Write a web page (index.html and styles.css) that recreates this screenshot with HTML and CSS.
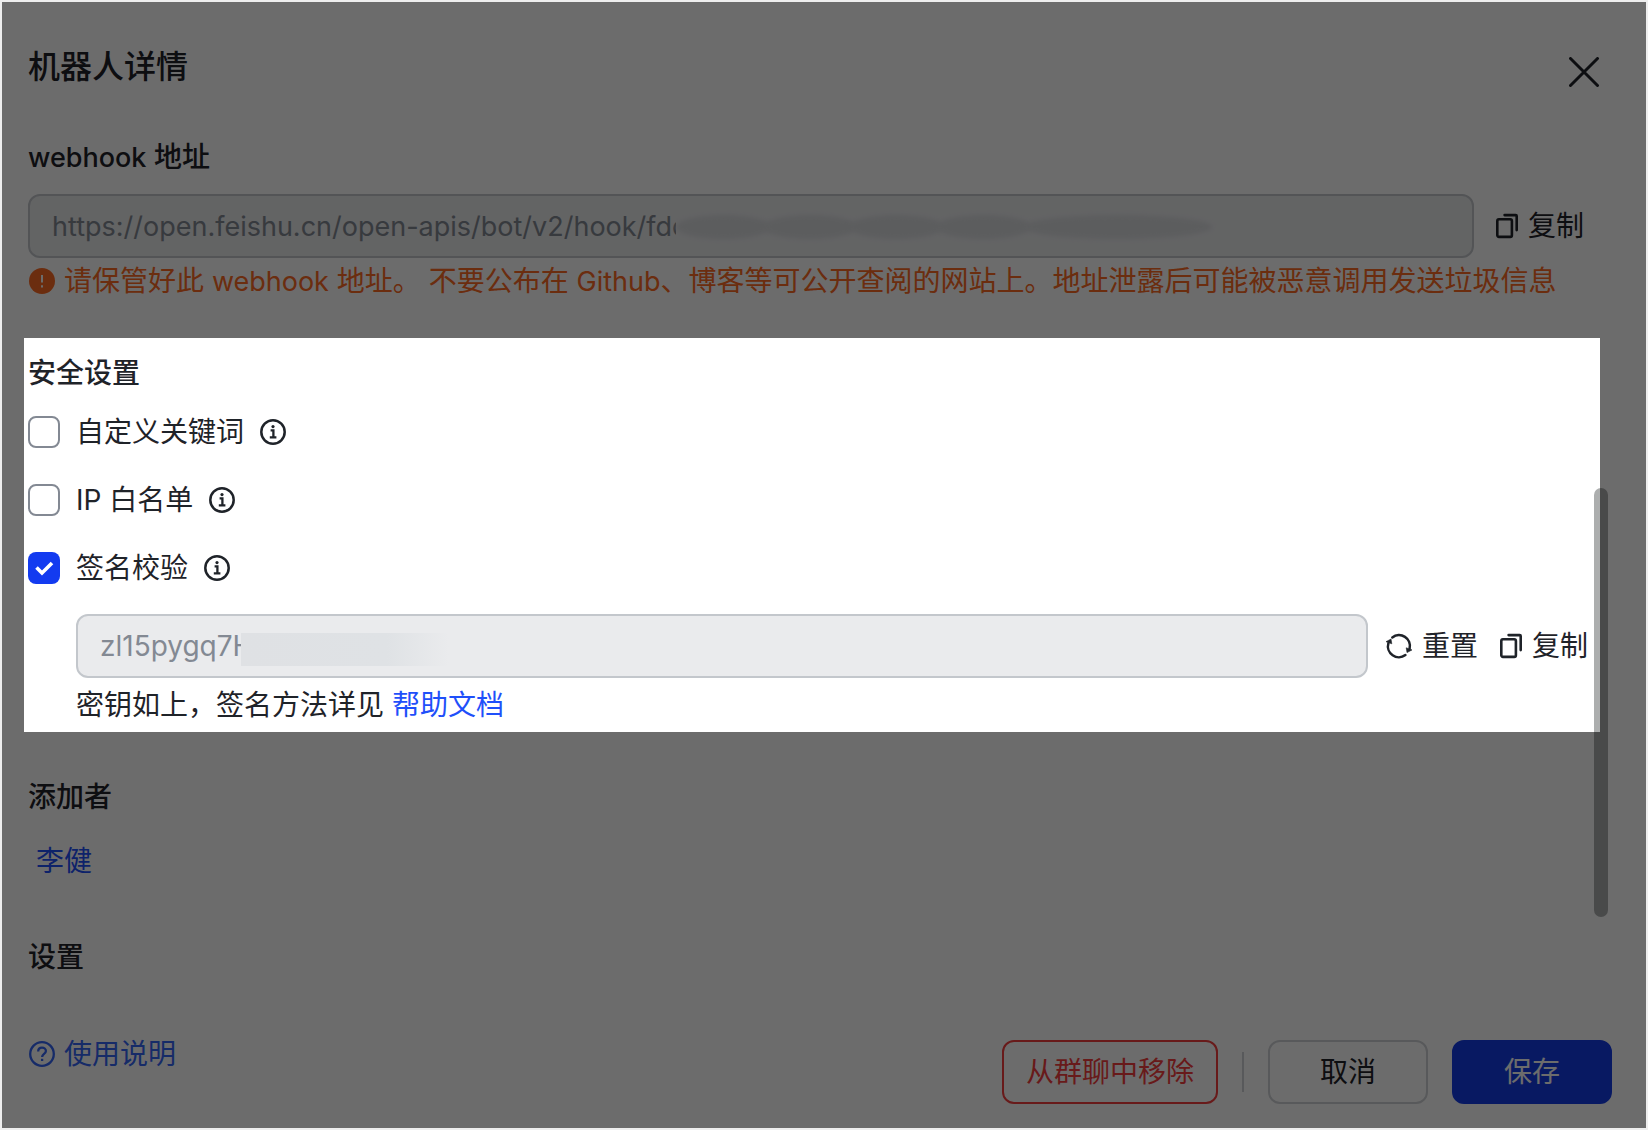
FILE: index.html
```html
<!DOCTYPE html>
<html lang="zh-CN">
<head>
<meta charset="utf-8">
<meta name="viewport" content="width=device-width, initial-scale=1">
<title>机器人详情</title>
<link rel="stylesheet" href="styles.css">
</head>
<body>
<svg class="sprite" aria-hidden="true">
  <symbol id="icon-info" viewBox="0 0 26 26">
    <circle cx="13" cy="13" r="11.7" fill="none" stroke="currentColor" stroke-width="2.5"/>
    <circle cx="13" cy="7.6" r="1.6" fill="currentColor"/>
    <path d="M10.6 11.3h2.8v6.9M9.8 18.3h6.6" fill="none" stroke="currentColor" stroke-width="2.3"/>
  </symbol>
  <symbol id="icon-copy" viewBox="0 0 22 26">
    <rect x="1.3" y="6.3" width="14.6" height="17.6" rx="1.6" fill="none" stroke="currentColor" stroke-width="2.6"/>
    <path d="M8.6 2.1h11.1a1 1 0 0 1 1 1v14" fill="none" stroke="currentColor" stroke-width="2.6" stroke-linecap="round"/>
  </symbol>
  <symbol id="icon-reset" viewBox="0 0 26 26">
    <path d="M6.3 4.4A10.9 10.9 0 0 1 23.6 15.6M19.4 22A10.9 10.9 0 0 1 2.4 10.2" fill="none" stroke="currentColor" stroke-width="2.5" stroke-linecap="round"/>
    <path d="M20.2 14.8l5.8 2.1-5 2.7zM5.8 10.8L0 8.7l5-2.7z" fill="currentColor" stroke="currentColor" stroke-width=".6"/>
  </symbol>
</svg>

<main class="dialog">
  <header class="header">
    <h1 class="title">机器人详情</h1>
    <button class="close" type="button" aria-label="关闭">
      <svg width="31" height="30" viewBox="0 0 31 30"><path d="M1.5 1.5l27 27M28.5 1.5l-27 27" stroke="currentColor" stroke-width="3" stroke-linecap="round"/></svg>
    </button>
  </header>

  <section class="webhook">
    <label class="heading" for="webhook-url"><span class="latin">webhook</span> 地址</label>
    <div class="row">
      <div class="field">
        <input class="input latin" id="webhook-url" type="text" readonly value="https://open.feishu.cn/open-apis/bot/v2/hook/fdc">
        <span class="mask mask-url"><i></i><i></i><i></i><i></i><i></i></span>
      </div>
      <button class="action" type="button"><svg class="icon-copy"><use href="#icon-copy"/></svg>复制</button>
    </div>
    <p class="warning">
      <svg class="icon" viewBox="0 0 26 26"><circle cx="13" cy="13" r="13" fill="currentColor"/><path class="warning-mark" d="M13 7v7.6M13 17.2v2.2"/></svg>
      <span>请保管好此 <span class="latin">webhook</span> 地址。 不要公布在 <span class="latin">Github</span>、博客等可公开查阅的网站上。地址泄露后可能被恶意调用发送垃圾信息</span>
    </p>
  </section>

  <section class="security">
    <h2 class="heading">安全设置</h2>
    <div class="options">
      <div class="option">
        <label class="option-label"><input class="checkbox" type="checkbox">自定义关键词</label>
        <svg class="icon"><use href="#icon-info"/></svg>
      </div>
      <div class="option">
        <label class="option-label"><input class="checkbox" type="checkbox">IP 白名单</label>
        <svg class="icon"><use href="#icon-info"/></svg>
      </div>
      <div class="option">
        <label class="option-label"><input class="checkbox" type="checkbox" checked>签名校验</label>
        <svg class="icon"><use href="#icon-info"/></svg>
      </div>
    </div>
    <div class="secret">
      <div class="row">
        <div class="field">
          <input class="input" type="text" readonly aria-label="签名密钥" value="zl15pygq7H">
          <span class="mask mask-secret"></span>
        </div>
        <button class="action reset" type="button"><svg class="icon"><use href="#icon-reset"/></svg>重置</button>
        <button class="action" type="button"><svg class="icon-copy"><use href="#icon-copy"/></svg>复制</button>
      </div>
      <p class="hint">密钥如上，签名方法详见 <a class="link" href="#">帮助文档</a></p>
    </div>
  </section>

  <section class="owner">
    <h2 class="heading">添加者</h2>
    <a class="link owner-name" href="#">李健</a>
  </section>

  <section class="settings">
    <h2 class="heading">设置</h2>
  </section>

  <footer class="footer">
    <a class="help" href="#">
      <svg class="icon" viewBox="0 0 26 26" fill="none" stroke="currentColor"><circle cx="13" cy="13" r="11.8" stroke-width="2.3"/><path d="M9.2 10.4c0-2.2 1.6-3.7 3.8-3.7s3.9 1.4 3.9 3.4c0 2.8-3.8 2.9-3.8 5.9" stroke-width="2.3"/><path d="M13.1 17.8v2.2" stroke-width="2.3"/></svg>
      使用说明
    </a>
    <div class="buttons">
      <button class="button danger" type="button">从群聊中移除</button>
      <span class="divider"></span>
      <button class="button" type="button">取消</button>
      <button class="button primary" type="button">保存</button>
    </div>
  </footer>
  <div class="scrollbar"></div>
</main>
</body>
</html>
```
FILE: styles.css
```css
* {
  box-sizing: border-box;
}

body {
  margin: 0;
  color: #1f2329;
  background: #fff;
  font: 400 28px/42px Inter, "Noto Sans CJK SC", sans-serif;
}

h1, h2, p {
  margin: 0;
}

a {
  text-decoration: none;
}

button, input {
  font: inherit;
  color: inherit;
}

button {
  padding: 0;
  border: 0;
  background: none;
  cursor: pointer;
}

svg {
  display: block;
  flex: none;
}

.sprite {
  position: absolute;
  width: 0;
  height: 0;
}

.dialog {
  position: relative;
  display: flex;
  flex-direction: column;
  min-height: 100vh;
  padding: 44px 46px 24px 26px;
  border: 2px solid #eee;
  overflow: hidden;
}

.header {
  display: flex;
  justify-content: space-between;
  align-items: flex-start;
  margin-bottom: 38px;
}

.title {
  font-size: 32px;
  line-height: 42px;
  font-weight: 500;
}

.close {
  display: flex;
  align-items: center;
  height: 52px;
}

.heading {
  display: block;
  font-size: 28px;
  line-height: 42px;
  font-weight: 500;
}

.latin {
  font-size: 27px;
  line-height: 1;
}

.row {
  display: flex;
  align-items: center;
  padding-right: 12px;
}

.field {
  position: relative;
  flex: 1;
}

.input {
  display: block;
  width: 100%;
  height: 64px;
  padding: 0 22px;
  border: 2px solid #c3c7cc;
  border-radius: 12px;
  outline: 0;
  color: #838993;
  background: #eaebed;
}

.mask {
  position: absolute;
  background: #eaebed;
}

.mask-url {
  top: 16px;
  left: 648px;
  display: flex;
  align-items: center;
  width: 532px;
  height: 34px;
}

.mask-url i {
  flex: 1;
  height: 24px;
  margin: 0 -4px;
  border-radius: 50%;
  background: #dadcdf;
  filter: blur(2px);
}

.mask-url i:first-child {
  margin-left: 0;
}

.mask-url i:last-child {
  flex: 2;
}

.mask-secret {
  top: 19px;
  left: 165px;
  width: 208px;
  height: 33px;
  background: linear-gradient(90deg, #dfe1e4, #dfe2e5 70%, #eaebed);
}

.action {
  display: flex;
  align-items: center;
  gap: 10px;
  margin-left: 22px;
}

.reset {
  margin-left: 18px;
}

.icon {
  width: 26px;
  height: 26px;
}

.icon-copy {
  width: 22px;
  height: 26px;
}

.webhook .heading {
  margin-bottom: 16px;
}

.webhook .row {
  padding-right: 16px;
}

.warning {
  display: flex;
  align-items: center;
  gap: 9px;
  margin-top: 2px;
  padding-left: 1px;
  color: #fd6a24;
}

.warning-mark {
  stroke: #fff;
  stroke-width: 2;
}

/* The highlighted section dims everything around it. */
.security {
  position: relative;
  z-index: 2;
  margin: 36px 0 44px -4px;
  padding: 14px 0 6px 4px;
  box-shadow: 0 0 0 9999px rgba(0, 0, 0, .576);
}

.options {
  display: grid;
  gap: 36px;
  margin: 22px 0 30px;
}

.option, .option-label {
  display: flex;
  align-items: center;
  gap: 16px;
  height: 32px;
}

.checkbox {
  appearance: none;
  width: 32px;
  height: 32px;
  margin: 0;
  border: 2px solid #838993;
  border-radius: 8px;
  background: #fff;
}

.checkbox:checked {
  border: 0;
  background: #133bf0 url("data:image/svg+xml,%3Csvg xmlns='http://www.w3.org/2000/svg' viewBox='0 0 32 32'%3E%3Cpath d='M8.5 15.5l5.5 5.5L24 11' fill='none' stroke='%23fff' stroke-width='3.6'/%3E%3C/svg%3E");
}

.secret {
  padding-left: 48px;
}

.hint {
  margin-top: 6px;
}

.link {
  color: #1f50fa;
}

.owner {
  display: grid;
  gap: 22px;
  margin-bottom: 54px;
}

.owner-name {
  justify-self: start;
  margin-left: 8px;
}

.footer {
  display: flex;
  justify-content: space-between;
  align-items: flex-start;
  margin: auto -12px 0 0;
}

.help {
  display: flex;
  align-items: center;
  gap: 9px;
  padding-left: 1px;
  line-height: 28px;
  color: #3566f5;
}

.buttons {
  display: flex;
  align-items: center;
  gap: 24px;
}

.button {
  min-width: 160px;
  height: 64px;
  padding: 0 22px;
  border: 2px solid #d0d3d6;
  border-radius: 12px;
}

.danger {
  border-color: #f53f3f;
  color: #f53f3f;
}

.primary {
  border-color: #143de8;
  color: #fff;
  background: #143de8;
}

.divider {
  width: 2px;
  height: 40px;
  background: #d0d3d6;
}

.scrollbar {
  position: absolute;
  z-index: 1;
  top: 486px;
  right: 38px;
  width: 14px;
  height: 429px;
  border-radius: 7px;
  background: #acaeae;
}
```
